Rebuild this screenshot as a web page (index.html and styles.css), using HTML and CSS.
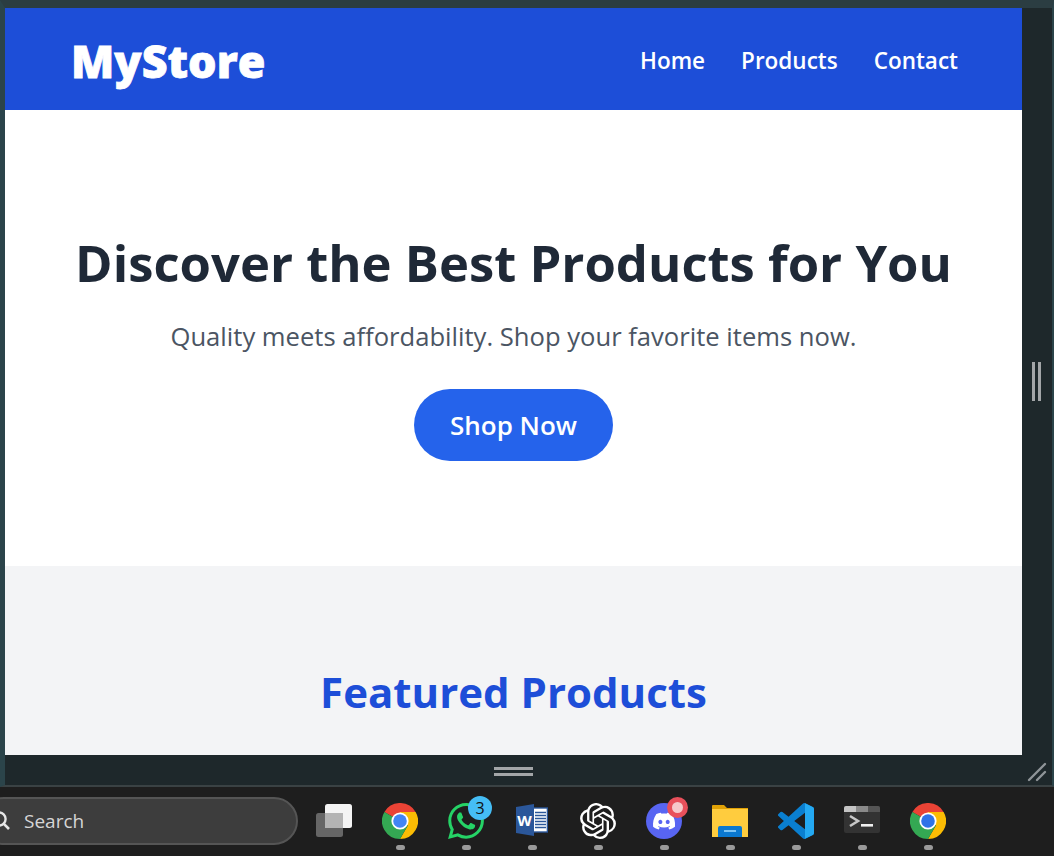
FILE: index.html
```html
<!DOCTYPE html>
<html lang="en">
<head>
    <meta charset="UTF-8">
    <meta name="viewport" content="width=device-width, initial-scale=1.0">
    <title>MyStore</title>
    <link rel="stylesheet" href="styles.css">
</head>
<body>
    <div class="desktop">
        <div class="window-row">
            <div class="page">
                <header class="site-header">
                    <div class="logo">MyStore</div>
                    <nav class="nav">
                        <a href="#">Home</a>
                        <a href="#">Products</a>
                        <a href="#">Contact</a>
                    </nav>
                </header>
                <section class="hero">
                    <h1>Discover the Best Products for You</h1>
                    <p>Quality meets affordability. Shop your favorite items now.</p>
                    <a class="shop-btn" href="#">Shop Now</a>
                </section>
                <section class="featured">
                    <h2>Featured Products</h2>
                </section>
            </div>
            <div class="side-pane">
                <span class="grip-v"></span>
                <span class="grip-v"></span>
            </div>
        </div>
        <div class="bottom-pane">
            <div class="grip-h"></div>
            <svg class="corner-grip" viewBox="0 0 20 20" width="20" height="20">
                <path d="M2 18 L18 2 M10 18 L18 10" stroke="#8f9598" stroke-width="2.4" stroke-linecap="round" fill="none"/>
            </svg>
        </div>
    </div>

    <footer class="taskbar">
        <div class="search">
            <svg class="search-icon" viewBox="0 0 20 20" width="20" height="20">
                <circle cx="8" cy="8" r="6.6" fill="none" stroke="#e6e6e6" stroke-width="2.4"/>
                <path d="M12.6 12.6 L18 18" stroke="#e6e6e6" stroke-width="2.6"/>
            </svg>
            <span>Search</span>
        </div>

        <div class="task-item">
            <svg viewBox="0 0 36 36" width="36" height="36">
                <rect x="0" y="10" width="27" height="24" rx="2.5" fill="#666"/>
                <rect x="9" y="1" width="27" height="24" rx="2.5" fill="#f4f4f4"/>
                <rect x="9" y="10" width="18" height="15" fill="#b4b4b4"/>
            </svg>
        </div>

        <div class="task-item running">
            <svg viewBox="0 0 36 36" width="36" height="36">
                <path d="M2.4 9 A18 18 0 0 1 33.6 9 H18 V18 L10.2 13.5 Z" fill="#ea4335"/>
                <path d="M33.6 9 A18 18 0 0 1 18 36 L25.8 22.5 L18 18 V9 Z" fill="#fbbc04"/>
                <path d="M18 36 A18 18 0 0 1 2.4 9 L10.2 13.5 L18 18 L25.8 22.5 Z" fill="#34a853"/>
                <circle cx="18" cy="18" r="8.6" fill="#fff"/>
                <circle cx="18" cy="18" r="6.8" fill="#4285f4"/>
            </svg>
        </div>

        <div class="task-item running">
            <svg viewBox="0 0 24 24" width="36" height="36">
                <path fill="#25d366" d="M17.472 14.382c-.297-.149-1.758-.867-2.03-.967-.273-.099-.471-.148-.67.15-.197.297-.767.966-.94 1.164-.173.199-.347.223-.644.075-.297-.15-1.255-.463-2.39-1.475-.883-.788-1.48-1.761-1.653-2.059-.173-.297-.018-.458.13-.606.134-.133.298-.347.446-.52.149-.174.198-.298.298-.497.099-.198.05-.371-.025-.52-.075-.149-.669-1.612-.916-2.207-.242-.579-.487-.5-.669-.51-.173-.008-.371-.01-.57-.01-.198 0-.52.074-.792.372-.272.297-1.04 1.016-1.04 2.479 0 1.462 1.065 2.875 1.213 3.074.149.198 2.096 3.2 5.077 4.487.709.306 1.262.489 1.694.625.712.227 1.36.195 1.871.118.571-.085 1.758-.719 2.006-1.413.248-.694.248-1.289.173-1.413-.074-.124-.272-.198-.57-.347m-5.421 7.403h-.004a9.87 9.87 0 01-5.031-1.378l-.361-.214-3.741.982.998-3.648-.235-.374a9.86 9.86 0 01-1.51-5.26c.001-5.45 4.436-9.884 9.888-9.884 2.64 0 5.122 1.03 6.988 2.898a9.825 9.825 0 012.893 6.994c-.003 5.45-4.437 9.884-9.885 9.884m8.413-18.297A11.815 11.815 0 0012.05 0C5.495 0 .16 5.335.157 11.892c0 2.096.547 4.142 1.588 5.945L.057 24l6.305-1.654a11.882 11.882 0 005.683 1.448h.005c6.554 0 11.89-5.335 11.893-11.893a11.821 11.821 0 00-3.48-8.413z"/>
            </svg>
            <span class="badge-count">3</span>
        </div>

        <div class="task-item running">
            <svg viewBox="0 0 32 34" width="32" height="34">
                <rect x="16" y="5" width="15.4" height="24" fill="#fff" stroke="#2b579a" stroke-width="1.4"/>
                <path d="M19 9.5 H30 M19 12.5 H30 M19 15.5 H30 M19 18.5 H30 M19 21.5 H30 M19 24.5 H30" stroke="#2b579a" stroke-width="1.5"/>
                <path d="M0 4 L18 1 V33 L0 30 Z" fill="#2b579a"/>
                <text class="word-letter" x="8.5" y="22.5" text-anchor="middle">W</text>
            </svg>
        </div>

        <div class="task-item running">
            <svg viewBox="0 0 24 24" width="36" height="36">
                <path fill="#fff" d="M22.2819 9.8211a5.9847 5.9847 0 0 0-.5157-4.9108 6.0462 6.0462 0 0 0-6.5098-2.9A6.0651 6.0651 0 0 0 4.9807 4.1818a5.9847 5.9847 0 0 0-3.9977 2.9 6.0462 6.0462 0 0 0 .7427 7.0966 5.98 5.98 0 0 0 .511 4.9107 6.051 6.051 0 0 0 6.5146 2.9001A5.9847 5.9847 0 0 0 13.2599 24a6.0557 6.0557 0 0 0 5.7718-4.2058 5.9894 5.9894 0 0 0 3.9977-2.9001 6.0557 6.0557 0 0 0-.7475-7.0729zm-9.022 12.6081a4.4755 4.4755 0 0 1-2.8764-1.0408l.1419-.0804 4.7783-2.7582a.7948.7948 0 0 0 .3927-.6813v-6.7369l2.02 1.1686a.071.071 0 0 1 .038.052v5.5826a4.504 4.504 0 0 1-4.4945 4.4944zm-9.6607-4.1254a4.4708 4.4708 0 0 1-.5346-3.0137l.142.0852 4.783 2.7582a.7712.7712 0 0 0 .7806 0l5.8428-3.3685v2.3324a.0804.0804 0 0 1-.0332.0615L9.74 19.9502a4.4992 4.4992 0 0 1-6.1408-1.6464zM2.3408 7.8956a4.485 4.485 0 0 1 2.3655-1.9728V11.6a.7664.7664 0 0 0 .3879.6765l5.8144 3.3543-2.0201 1.1685a.0757.0757 0 0 1-.071 0l-4.8303-2.7865A4.504 4.504 0 0 1 2.3408 7.872zm16.5963 3.8558L13.1038 8.364 15.1192 7.2a.0757.0757 0 0 1 .071 0l4.8303 2.7913a4.4944 4.4944 0 0 1-.6765 8.1042v-5.6772a.79.79 0 0 0-.407-.667zm2.0107-3.0231l-.142-.0852-4.7735-2.7818a.7759.7759 0 0 0-.7854 0L9.409 9.2297V6.8974a.0662.0662 0 0 1 .0284-.0615l4.8303-2.7866a4.4992 4.4992 0 0 1 6.6802 4.66zM8.3065 12.863l-2.02-1.1638a.0804.0804 0 0 1-.038-.0567V6.0742a4.4992 4.4992 0 0 1 7.3757-3.4537l-.142.0805L8.704 5.459a.7948.7948 0 0 0-.3927.6813zm1.0976-2.3654l2.602-1.4998 2.6069 1.4998v2.9994l-2.5974 1.4997-2.6067-1.4997Z"/>
            </svg>
        </div>

        <div class="task-item running">
            <svg viewBox="0 0 36 36" width="36" height="36">
                <circle cx="18" cy="18" r="18" fill="#5865f2"/>
                <g transform="translate(7 7) scale(0.92)">
                    <path fill="#fff" d="M20.317 4.3698a19.7913 19.7913 0 00-4.8851-1.5152.0741.0741 0 00-.0785.0371c-.211.3753-.4447.8648-.6083 1.2495-1.8447-.2762-3.68-.2762-5.4868 0-.1636-.3933-.4058-.8742-.6177-1.2495a.077.077 0 00-.0785-.037 19.7363 19.7363 0 00-4.8852 1.515.0699.0699 0 00-.0321.0277C.5334 9.0458-.319 13.5799.0992 18.0578a.0824.0824 0 00.0312.0561c2.0528 1.5076 4.0413 2.4228 5.9929 3.0294a.0777.0777 0 00.0842-.0276c.4616-.6304.8731-1.2952 1.226-1.9942a.076.076 0 00-.0416-.1057c-.6528-.2476-1.2743-.5495-1.8722-.8923a.077.077 0 01-.0076-.1277c.1258-.0943.2517-.1923.3718-.2914a.0743.0743 0 01.0776-.0105c3.9278 1.7933 8.18 1.7933 12.0614 0a.0739.0739 0 01.0785.0095c.1202.099.246.1981.3728.2924a.077.077 0 01-.0066.1276 12.2986 12.2986 0 01-1.873.8914.0766.0766 0 00-.0407.1067c.3604.698.7719 1.3628 1.225 1.9932a.076.076 0 00.0842.0286c1.961-.6067 3.9495-1.5219 6.0023-3.0294a.077.077 0 00.0313-.0552c.5004-5.177-.8382-9.6739-3.5485-13.6604a.061.061 0 00-.0312-.0286zM8.02 15.3312c-1.1825 0-2.1569-1.0857-2.1569-2.419 0-1.3332.9555-2.4189 2.157-2.4189 1.2108 0 2.1757 1.0952 2.1568 2.419 0 1.3332-.9555 2.4189-2.1569 2.4189zm7.9748 0c-1.1825 0-2.1569-1.0857-2.1569-2.419 0-1.3332.9554-2.4189 2.1569-2.4189 1.2108 0 2.1757 1.0952 2.1568 2.419 0 1.3332-.946 2.4189-2.1568 2.4189Z"/>
                </g>
            </svg>
            <span class="badge-rec"></span>
        </div>

        <div class="task-item running">
            <svg viewBox="0 0 36 36" width="36" height="36">
                <path d="M0 3 Q0 2 1 2 H12 L15 5 H36 V20 H0 Z" fill="#e0a106"/>
                <path d="M0 6 H36 V34 H0 Z" fill="#ffcc3e"/>
                <path d="M6 34 V25 Q6 23 8 23 H28 Q30 23 30 25 V34 Z" fill="#0a78d0"/>
                <rect x="12" y="27" width="12" height="2" fill="#7cc4f5"/>
            </svg>
        </div>

        <div class="task-item running">
            <svg viewBox="0 0 24 24" width="36" height="36">
                <path fill="#0a7fd0" d="M23.15 2.587L18.21.21a1.494 1.494 0 0 0-1.705.29l-9.46 8.63-4.12-3.128a.999.999 0 0 0-1.276.057L.327 7.261A1 1 0 0 0 .326 8.74L3.899 12 .326 15.26a1 1 0 0 0 .001 1.479L1.65 17.94a.999.999 0 0 0 1.276.057l4.12-3.128 9.46 8.63a1.492 1.492 0 0 0 1.704.29l4.942-2.377A1.5 1.5 0 0 0 24 20.06V3.939a1.5 1.5 0 0 0-.85-1.352zm-5.146 14.861L10.826 12l7.178-5.448v10.896z"/>
                <path fill="#24a9f2" d="M18 .2 L23.15 2.587 A1.5 1.5 0 0 1 24 3.939 V20.06 A1.5 1.5 0 0 1 23.15 21.413 L18 23.8 Z"/>
            </svg>
        </div>

        <div class="task-item running">
            <svg viewBox="0 0 36 36" width="36" height="36">
                <rect x="0" y="3" width="36" height="27" rx="2" fill="#333"/>
                <path d="M0 9 V5 Q0 3 2 3 H12 V9 Z" fill="#c4c4c4"/>
                <rect x="12" y="3" width="12" height="6" fill="#8a8a8a"/>
                <path d="M24 3 H34 Q36 3 36 5 V9 H24 Z" fill="#555"/>
                <path d="M6 13 L14 18 L6 23" fill="none" stroke="#c8c8c8" stroke-width="2.6"/>
                <rect x="17" y="21" width="12" height="2.6" fill="#f0f0f0"/>
            </svg>
        </div>

        <div class="task-item running">
            <svg viewBox="0 0 36 36" width="36" height="36">
                <path d="M2.4 9 A18 18 0 0 1 33.6 9 H18 V18 L10.2 13.5 Z" fill="#ea4335"/>
                <path d="M33.6 9 A18 18 0 0 1 18 36 L25.8 22.5 L18 18 V9 Z" fill="#fbbc04"/>
                <path d="M18 36 A18 18 0 0 1 2.4 9 L10.2 13.5 L18 18 L25.8 22.5 Z" fill="#34a853"/>
                <circle cx="18" cy="18" r="8.6" fill="#fff"/>
                <circle cx="18" cy="18" r="6.8" fill="#2f73e8"/>
            </svg>
        </div>
    </footer>
</body>
</html>
```

FILE: styles.css
```css
* {
    box-sizing: border-box;
}
html, body {
    height: 100%;
}
body {
    margin: 0;
    overflow: hidden;
    display: flex;
    flex-direction: column;
    font-family: "Open Sans", "Noto Sans", sans-serif;
    background: #1e282b;
}
.desktop {
    height: 787px;
    display: flex;
    flex-direction: column;
    background: #1e282b;
    border-top: 8px solid #2b3d42;
    border-left: 5px solid #2b444a;
    border-right: 2px solid #2b444a;
    border-bottom: 2px solid #3a4244;
}
.window-row {
    height: 747px;
    display: flex;
}
.page {
    width: 1017px;
    height: 747px;
    overflow: hidden;
    background: #fff;
}
.site-header {
    height: 102px;
    background: #1d4ed8;
    color: #fff;
    display: flex;
    align-items: center;
    justify-content: space-between;
    padding: 0 64px 0 66px;
}
.logo {
    padding-top: 3px;
    font-size: 44.8px;
    font-weight: 800;
    -webkit-text-stroke: 0.8px #fff;
}
.nav {
    display: flex;
    gap: 36px;
    padding-top: 2px;
}
.nav a {
    color: #fff;
    font-size: 22.5px;
    font-weight: 600;
    text-decoration: none;
}
.hero {
    height: 456px;
    background: #fff;
    text-align: center;
    padding-top: 120px;
}
.hero h1 {
    margin: 0;
    font-size: 50.8px;
    line-height: 66px;
    font-weight: 700;
    color: #1f2937;
}
.hero p {
    margin: 25px 0 0;
    font-size: 25.6px;
    line-height: 32px;
    color: #4b5563;
}
.shop-btn {
    display: inline-block;
    margin-top: 36px;
    padding: 0 36px;
    height: 72px;
    line-height: 72px;
    border-radius: 36px;
    background: #2563eb;
    color: #fff;
    font-size: 26px;
    font-weight: 600;
    text-decoration: none;
}
.featured {
    height: 189px;
    background: #f3f4f6;
    text-align: center;
    padding-top: 96px;
}
.featured h2 {
    margin: 0;
    font-size: 42px;
    line-height: 60px;
    font-weight: 700;
    color: #1d4ed8;
}
.side-pane {
    flex: 1;
    display: flex;
    align-items: center;
    justify-content: center;
    gap: 3px;
    padding-right: 1px;
}
.grip-v {
    width: 3px;
    height: 39px;
    background: #a3a6a8;
}
.bottom-pane {
    position: relative;
    flex: 1;
    display: flex;
    align-items: center;
    padding-top: 2px;
}
.grip-h {
    width: 39px;
    height: 9px;
    margin-left: 489px;
    border-top: 3px solid #a3a6a8;
    border-bottom: 3px solid #a3a6a8;
}
.corner-grip {
    position: absolute;
    right: 5px;
    bottom: 3px;
}
.taskbar {
    height: 69px;
    display: flex;
    align-items: flex-start;
    background: #1e1e1e;
}
.search {
    width: 318px;
    height: 48px;
    margin: 10px 3px 0 -20px;
    display: flex;
    align-items: center;
    gap: 13px;
    padding-left: 9px;
    color: #d6d6d6;
    font-size: 19px;
    background: #3d3d3d;
    border: 2px solid #555;
    border-radius: 24px;
}
.task-item {
    position: relative;
    width: 66px;
    height: 69px;
    display: flex;
    justify-content: center;
    padding-top: 16px;
}
.task-item svg {
    display: block;
}
.task-item.running::after {
    content: "";
    position: absolute;
    left: 29px;
    bottom: 6px;
    width: 9px;
    height: 5px;
    border-radius: 3px;
    background: #9a9a9a;
}
.word-letter {
    font-family: "Open Sans", sans-serif;
    font-size: 15px;
    font-weight: 700;
    fill: #fff;
}
.badge-count {
    position: absolute;
    left: 35px;
    top: 9px;
    width: 24px;
    height: 24px;
    border-radius: 50%;
    background: #45bdf5;
    color: #111;
    font-size: 16px;
    line-height: 24px;
    text-align: center;
}
.badge-rec {
    position: absolute;
    left: 36px;
    top: 10px;
    width: 21px;
    height: 21px;
    border-radius: 50%;
    background: #e8505b;
}
.badge-rec::after {
    content: "";
    position: absolute;
    left: 5px;
    top: 5px;
    width: 11px;
    height: 11px;
    border-radius: 50%;
    background: #f6c9cb;
}
```
